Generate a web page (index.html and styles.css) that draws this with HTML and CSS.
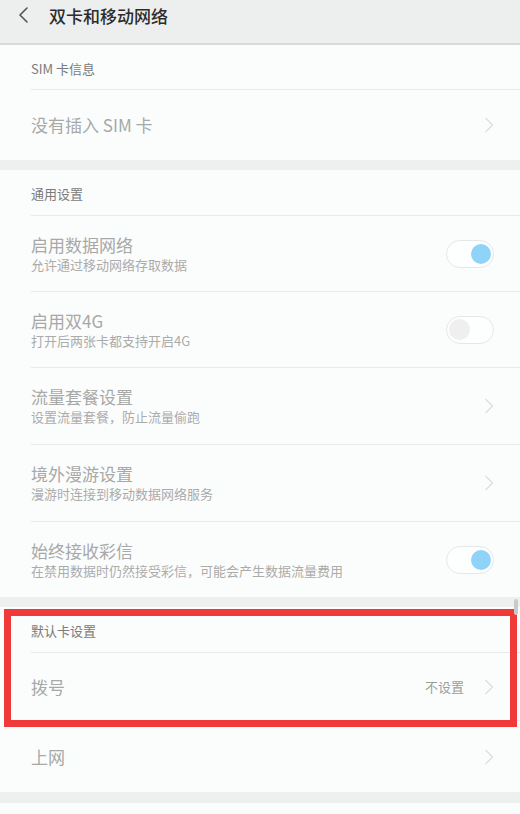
FILE: index.html
```html
<!DOCTYPE html>
<html lang="zh-CN">
<head>
<meta charset="utf-8">
<title>双卡和移动网络</title>
<link rel="stylesheet" href="styles.css">
</head>
<body>
<div class="page">
  <header class="topbar">
    <svg class="back" width="12" height="16" viewBox="0 0 12 16"><polyline points="10,1 3,8 10,15" fill="none" stroke="#555" stroke-width="1.6" stroke-linecap="round" stroke-linejoin="round"/></svg>
    <span class="topbar-title">双卡和移动网络</span>
  </header>

  <section class="group">
    <div class="group-head g1">SIM 卡信息</div>
    <div class="row r70">
      <div class="row-text"><div class="row-title">没有插入 SIM 卡</div></div>
      <svg class="chev" width="10" height="16" viewBox="0 0 10 16"><polyline points="1.5,1 8.5,8 1.5,15" fill="none" stroke="#dcdcdc" stroke-width="1.2"/></svg>
    </div>
  </section>
  <div class="gap"></div>

  <section class="group">
    <div class="group-head">通用设置</div>
    <div class="row">
      <div class="row-text"><div class="row-title">启用数据网络</div><div class="row-sub">允许通过移动网络存取数据</div></div>
      <div class="toggle on"><span class="knob"></span></div>
    </div>
    <div class="row">
      <div class="row-text"><div class="row-title">启用双4G</div><div class="row-sub">打开后两张卡都支持开启4G</div></div>
      <div class="toggle"><span class="knob"></span></div>
    </div>
    <div class="row r77">
      <div class="row-text"><div class="row-title">流量套餐设置</div><div class="row-sub">设置流量套餐，防止流量偷跑</div></div>
      <svg class="chev" width="10" height="16" viewBox="0 0 10 16"><polyline points="1.5,1 8.5,8 1.5,15" fill="none" stroke="#dcdcdc" stroke-width="1.2"/></svg>
    </div>
    <div class="row r77">
      <div class="row-text"><div class="row-title">境外漫游设置</div><div class="row-sub">漫游时连接到移动数据网络服务</div></div>
      <svg class="chev" width="10" height="16" viewBox="0 0 10 16"><polyline points="1.5,1 8.5,8 1.5,15" fill="none" stroke="#dcdcdc" stroke-width="1.2"/></svg>
    </div>
    <div class="row">
      <div class="row-text"><div class="row-title">始终接收彩信</div><div class="row-sub">在禁用数据时仍然接受彩信，可能会产生数据流量费用</div></div>
      <div class="toggle on"><span class="knob"></span></div>
    </div>
  </section>
  <div class="gap"></div>

  <section class="group">
    <div class="group-head">默认卡设置</div>
    <div class="row r67">
      <div class="row-text"><div class="row-title">拨号</div></div>
      <span class="row-value">不设置</span>
      <svg class="chev" width="10" height="16" viewBox="0 0 10 16"><polyline points="1.5,1 8.5,8 1.5,15" fill="none" stroke="#dcdcdc" stroke-width="1.2"/></svg>
    </div>
    <div class="row r71">
      <div class="row-text"><div class="row-title">上网</div></div>
      <svg class="chev" width="10" height="16" viewBox="0 0 10 16"><polyline points="1.5,1 8.5,8 1.5,15" fill="none" stroke="#dcdcdc" stroke-width="1.2"/></svg>
    </div>
  </section>
  <div class="gap g11"></div>
  <section class="group tail"></section>

  <div class="highlight"></div>
  <div class="scrollbar"></div>
</div>
</body>
</html>
```

FILE: styles.css
```css
html, body {
  margin: 0;
  padding: 0;
  background: #fbfdfc;
}
body {
  font-family: "Noto Sans CJK SC", "Noto Sans", sans-serif;
  width: 520px;
  height: 814px;
  overflow: hidden;
}
.page {
  position: relative;
  width: 520px;
  height: 814px;
  overflow: hidden;
}
.topbar {
  height: 43px;
  background: #edefee;
  border-bottom: 2px solid #d8dad9;
  display: flex;
  align-items: center;
  padding-left: 17px;
  box-sizing: content-box;
}
.back {
  display: block;
  margin-top: -14px;
}
.topbar-title {
  margin-left: 20px;
  margin-top: -13px;
  font-size: 17px;
  font-weight: 500;
  color: #2c2c2c;
}
.group {
  background: #fbfdfc;
}
.group.tail {
  height: 20px;
}
.gap {
  height: 10px;
  background: #eef0ef;
}
.gap.g11 {
  height: 11px;
}
.group-head {
  height: 45px;
  padding-left: 31px;
  display: flex;
  align-items: center;
  font-size: 13px;
  color: #7a7a7a;
  box-sizing: border-box;
  padding-top: 2px;
}
.group-head.g1 {
  height: 44px;
}
.row {
  height: 76px;
  margin-left: 31px;
  padding-right: 26px;
  border-top: 1px solid #e8eae9;
  display: flex;
  align-items: center;
  box-sizing: border-box;
}
.row.r70 { height: 71px; }
.row.r77 { height: 77px; }
.row.r67 { height: 68px; }
.row.r71 { height: 72px; }
.row-text {
  flex: 1;
  min-width: 0;
}
.row-title {
  font-size: 17px;
  line-height: 22px;
  color: #a8a8a8;
}
.row-sub {
  font-size: 13px;
  line-height: 18px;
  color: #ababab;
  white-space: nowrap;
}
.row-value {
  font-size: 13px;
  color: #9d9d9d;
  margin-right: 20px;
}
.chev {
  display: block;
  flex: none;
}
.toggle {
  width: 48px;
  height: 28px;
  box-sizing: border-box;
  border: 1px solid #e6e8e7;
  border-radius: 14px;
  background: #fdfefe;
  display: flex;
  align-items: center;
  padding: 0 2px;
  flex: none;
}
.knob {
  width: 21px;
  height: 21px;
  border-radius: 50%;
  background: #efefef;
}
.toggle.on {
  justify-content: flex-end;
}
.toggle.on .knob {
  width: 20px;
  height: 20px;
  background: #8fd4f8;
}
.highlight {
  position: absolute;
  left: 4px;
  top: 609px;
  width: 513px;
  height: 118px;
  border: 7px solid #f03a3a;
  box-sizing: border-box;
}
.scrollbar {
  position: absolute;
  left: 514px;
  top: 599px;
  width: 4px;
  height: 16px;
  border-radius: 2px;
  background: #c9cbca;
}
```
